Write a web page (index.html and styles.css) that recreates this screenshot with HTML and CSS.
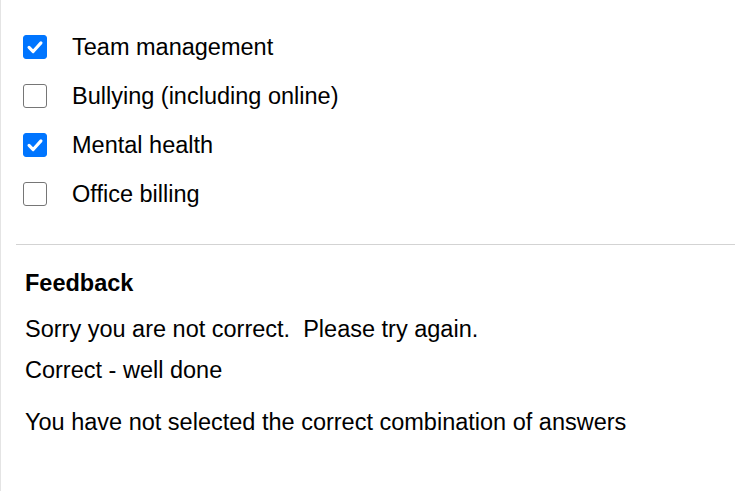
FILE: index.html
```html
<!DOCTYPE html>
<html>
<head>
<meta charset="utf-8">
<link rel="stylesheet" href="styles.css">
</head>
<body>
<div class="panel">
  <ul class="options">
    <li class="option"><span class="box checked"><svg viewBox="0 0 24 24" width="24" height="24"><path d="M5.5 12.5 L10 17 L18.5 7.5" fill="none" stroke="#fff" stroke-width="3.4" stroke-linecap="round" stroke-linejoin="round"/></svg></span><span class="label">Team management</span></li>
    <li class="option"><span class="box"></span><span class="label">Bullying (including online)</span></li>
    <li class="option"><span class="box checked"><svg viewBox="0 0 24 24" width="24" height="24"><path d="M5.5 12.5 L10 17 L18.5 7.5" fill="none" stroke="#fff" stroke-width="3.4" stroke-linecap="round" stroke-linejoin="round"/></svg></span><span class="label">Mental health</span></li>
    <li class="option"><span class="box"></span><span class="label">Office billing</span></li>
  </ul>
  <div class="divider"></div>
  <div class="feedback">
    <h3 class="fb-title">Feedback</h3>
    <p class="fb-line fb-sorry">Sorry you are not correct.&nbsp; Please try again.</p>
    <p class="fb-line fb-correct">Correct - well done</p>
    <p class="fb-line fb-combo">You have not selected the correct combination of answers</p>
  </div>
</div>
</body>
</html>
```
FILE: styles.css
```css
html, body {
  margin: 0;
  padding: 0;
  background: #fff;
}
body {
  font-family: "Liberation Sans", Arial, sans-serif;
  color: #000;
  font-size: 23.5px;
}
.panel {
  border-left: 1px solid #e4e4e4;
  min-height: 491px;
  box-sizing: border-box;
  padding-top: 22px;
}
.options {
  list-style: none;
  margin: 0;
  padding: 0 0 0 22px;
}
.option {
  display: flex;
  align-items: center;
  height: 49px;
}
.box {
  width: 24px;
  height: 24px;
  box-sizing: border-box;
  border: 1.5px solid #767676;
  border-radius: 3px;
  margin-right: 25px;
  display: flex;
  align-items: center;
  justify-content: center;
  flex: none;
  background: #fff;
}
.box.checked {
  background: #0075ff;
  border-color: #0075ff;
}
.box svg {
  width: 22px;
  height: 22px;
}
.label {
  line-height: 26px;
}
.divider {
  margin: 26px 0 0 15px;
  height: 1px;
  background: #d3d3d3;
}
.feedback {
  padding: 24px 0 0 24px;
}
.fb-title {
  margin: 0;
  font-size: 23.5px;
  font-weight: bold;
  line-height: 28px;
}
.fb-line {
  margin: 0;
  line-height: 28px;
}
.fb-sorry { margin-top: 18px; }
.fb-correct { margin-top: 13px; }
.fb-combo { margin-top: 24px; }
```
